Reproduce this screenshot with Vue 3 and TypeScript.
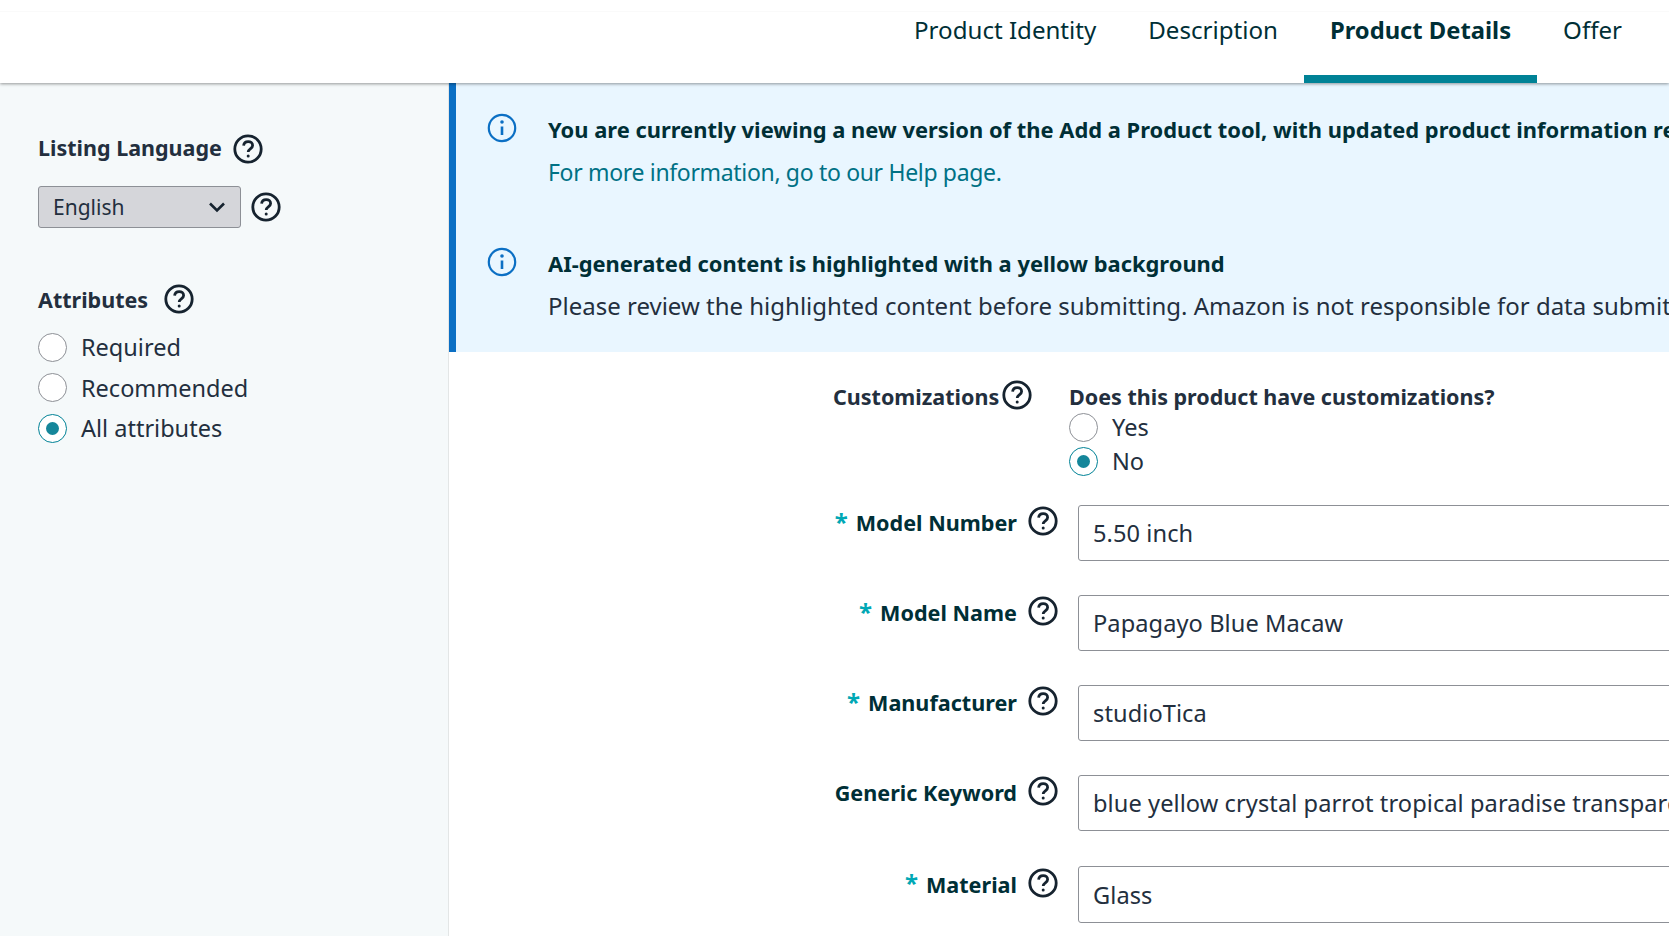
<script setup lang="ts">
const tabs = [
  { label: 'Product Identity', active: false },
  { label: 'Description', active: false },
  { label: 'Product Details', active: true },
  { label: 'Offer', active: false },
]
const attrs = [
  { label: 'Required', on: false },
  { label: 'Recommended', on: false },
  { label: 'All attributes', on: true },
]
const rows = [
  { label: 'Model Number', req: true, value: '5.50 inch' },
  { label: 'Model Name', req: true, value: 'Papagayo Blue Macaw' },
  { label: 'Manufacturer', req: true, value: 'studioTica' },
  { label: 'Generic Keyword', req: false, value: 'blue yellow crystal parrot tropical paradise transparent glass figurine collectible' },
  { label: 'Material', req: true, value: 'Glass' },
]
</script>

<template>
  <div class="page">
    <header class="top">
      <nav class="tabs">
        <div v-for="t in tabs" :key="t.label" class="tab" :class="{ active: t.active }">{{ t.label }}</div>
      </nav>
    </header>
    <div class="body">
      <aside class="side">
        <div class="side-head">
          <span class="side-title">Listing Language</span>
          <svg class="help" viewBox="0 0 30 30"><circle cx="15" cy="15" r="13.2" /><path d="M10.6 11.6c.3-2.5 2.2-4 4.6-4 2.5 0 4.4 1.5 4.4 3.8 0 3.4-4.4 3.4-4.4 6.6" /><circle class="dot" cx="15.2" cy="22" r="1.5" /></svg>
        </div>
        <div class="lang-row">
          <div class="select">
            <span>English</span>
            <svg class="chev" viewBox="0 0 18 12"><path d="M2 2.5 9 9.5 16 2.5" /></svg>
          </div>
          <svg class="help" viewBox="0 0 30 30"><circle cx="15" cy="15" r="13.2" /><path d="M10.6 11.6c.3-2.5 2.2-4 4.6-4 2.5 0 4.4 1.5 4.4 3.8 0 3.4-4.4 3.4-4.4 6.6" /><circle class="dot" cx="15.2" cy="22" r="1.5" /></svg>
        </div>
        <div class="attr-head">
          <span class="side-title">Attributes</span>
          <svg class="help" viewBox="0 0 30 30"><circle cx="15" cy="15" r="13.2" /><path d="M10.6 11.6c.3-2.5 2.2-4 4.6-4 2.5 0 4.4 1.5 4.4 3.8 0 3.4-4.4 3.4-4.4 6.6" /><circle class="dot" cx="15.2" cy="22" r="1.5" /></svg>
        </div>
        <div class="attr-list">
          <label v-for="a in attrs" :key="a.label" class="radio-row">
            <span class="radio" :class="{ on: a.on }"></span>
            <span>{{ a.label }}</span>
          </label>
        </div>
      </aside>
      <main class="main">
        <section class="banner">
          <div class="msg">
            <svg class="info" viewBox="0 0 30 30"><circle cx="15" cy="15" r="13.2" /><path d="M15 13.5v8.5" /><circle class="idot" cx="15" cy="9" r="1.8" /></svg>
            <div>
              <div class="msg-title">You are currently viewing a new version of the Add a Product tool, with updated product information requirements.</div>
              <div class="msg-link">For more information, go to our Help page.</div>
            </div>
          </div>
          <div class="msg second">
            <svg class="info" viewBox="0 0 30 30"><circle cx="15" cy="15" r="13.2" /><path d="M15 13.5v8.5" /><circle class="idot" cx="15" cy="9" r="1.8" /></svg>
            <div>
              <div class="msg-title">AI-generated content is highlighted with a yellow background</div>
              <div class="msg-text">Please review the highlighted content before submitting. Amazon is not responsible for data submitted.</div>
            </div>
          </div>
        </section>
        <section class="form">
          <div class="custom">
            <div class="custom-label">
              <span class="strong">Customizations</span>
              <svg class="help" viewBox="0 0 30 30"><circle cx="15" cy="15" r="13.2" /><path d="M10.6 11.6c.3-2.5 2.2-4 4.6-4 2.5 0 4.4 1.5 4.4 3.8 0 3.4-4.4 3.4-4.4 6.6" /><circle class="dot" cx="15.2" cy="22" r="1.5" /></svg>
            </div>
            <div class="custom-body">
              <div class="strong">Does this product have customizations?</div>
              <label class="radio-row tight"><span class="radio"></span><span>Yes</span></label>
              <label class="radio-row tight"><span class="radio on"></span><span>No</span></label>
            </div>
          </div>
          <div v-for="r in rows" :key="r.label" class="row">
            <div class="row-label">
              <span v-if="r.req" class="star">*</span>
              <span class="name">{{ r.label }}</span>
              <svg class="help" viewBox="0 0 30 30"><circle cx="15" cy="15" r="13.2" /><path d="M10.6 11.6c.3-2.5 2.2-4 4.6-4 2.5 0 4.4 1.5 4.4 3.8 0 3.4-4.4 3.4-4.4 6.6" /><circle class="dot" cx="15.2" cy="22" r="1.5" /></svg>
            </div>
            <div class="input">{{ r.value }}</div>
          </div>
        </section>
      </main>
    </div>
  </div>
</template>

<style>
html, body { margin: 0; background: #fff; overflow: hidden; }
</style>

<style scoped>
.page {
  width: 1669px;
  height: 936px;
  overflow: hidden;
  font-family: "Noto Sans", sans-serif;
  color: #232f3e;
  display: flex;
  flex-direction: column;
}
.top {
  height: 71px;
  padding-top: 12px;
  flex: none;
  box-shadow: 0 1px 3px rgba(0, 0, 0, .4);
  position: relative;
  z-index: 2;
  background: linear-gradient(#fafafa 0, #fafafa 1px, #fff 1px);
  background-position: 0 11px;
  background-repeat: no-repeat;
  display: flex;
  justify-content: flex-end;
}
.tabs { display: flex; height: 71px; padding-right: 21px; }
.tab {
  padding: 2px 26px 0;
  font-size: 24.1px;
  line-height: 32px;
  color: #002f36;
  box-sizing: border-box;
  white-space: nowrap;
}
.tab.active { font-size: 23.75px; font-weight: 700; border-bottom: 8px solid #008296; }
.body { flex: 1; display: flex; min-height: 0; }
.side {
  width: 449px;
  flex: none;
  box-sizing: border-box;
  background: #f5f9fa;
  border-right: 1px solid #e3e6e6;
  padding: 50px 0 0 38px;
}
.side-head, .lang-row, .attr-head { display: flex; align-items: center; }
.side-head { gap: 11px; height: 30px; }
.side-head .help { margin-top: 2px; }
.attr-head .side-title { margin-top: 2px; }
.side-title { font-size: 21.5px; font-weight: 700; line-height: 30px; }
.help { width: 30px; height: 30px; flex: none; }
.help circle { fill: none; stroke: #16232f; stroke-width: 2.8; }
.help path { fill: none; stroke: #16232f; stroke-width: 2.8; }
.help .dot { fill: #16232f; stroke: none; }
.lang-row { margin-top: 23px; gap: 10px; }
.select {
  width: 203px;
  height: 42px;
  box-sizing: border-box;
  border: 1px solid #8d9096;
  border-radius: 3px;
  background: #d5d6da;
  padding: 0 14px;
  font-size: 21px;
  display: flex;
  align-items: center;
  justify-content: space-between;
}
.chev { width: 18px; height: 12px; }
.chev path { fill: none; stroke: #16232f; stroke-width: 2.6; }
.attr-head { margin-top: 56px; gap: 16px; height: 30px; }
.attr-list { margin-top: 18px; display: flex; flex-direction: column; gap: 10.5px; }
.radio-row {
  display: flex;
  align-items: center;
  gap: 14px;
  font-size: 23.5px;
  line-height: 30px;
  height: 30px;
}
.radio {
  width: 29px;
  height: 29px;
  box-sizing: border-box;
  border: 1px solid #8d9096;
  border-radius: 50%;
  background: #fff;
  flex: none;
  position: relative;
}
.radio.on { border-color: #008296; }
.radio.on::after {
  content: "";
  position: absolute;
  left: 7px;
  top: 7px;
  width: 13px;
  height: 13px;
  border-radius: 50%;
  background: #15869a;
}
.main { flex: 1; min-width: 0; overflow: hidden; }
.banner {
  height: 269px;
  box-sizing: border-box;
  background: #e9f6ff;
  border-left: 7px solid #0b6fc4;
  padding: 32px 0 0 31px;
}
.msg { display: flex; gap: 31px; white-space: nowrap; }
.msg.second { margin-top: 62px; }
.info { width: 30px; height: 30px; flex: none; margin-top: -2px; }
.info circle { fill: none; stroke: #0b6fc4; stroke-width: 2.2; }
.info path { fill: none; stroke: #0b6fc4; stroke-width: 2.6; }
.info .idot { fill: #0b6fc4; stroke: none; }
.msg-title { font-size: 21.9px; font-weight: 700; color: #002f36; line-height: 30px; }
.msg-link { font-size: 23px; letter-spacing: -.33px; color: #007185; line-height: 30px; margin-top: 12px; }
.msg-text { font-size: 24px; color: #232f3e; line-height: 30px; margin-top: 12px; }
.form { padding-top: 30px; }
.custom { display: flex; }
.custom-label {
  width: 568px;
  box-sizing: border-box;
  padding-left: 384px;
  display: flex;
  align-items: flex-start;
  flex: none;
}
.custom-label .help { margin: -2px 0 0 3px; }
.strong { font-size: 21.5px; font-weight: 700; line-height: 30px; }
.custom-body { display: flex; flex-direction: column; margin-left: 52px; }
.radio-row.tight { height: 30px; margin-top: 4px; }
.strong + .radio-row.tight { margin-top: 0; }
.custom + .row { margin-top: 29px; }
.row { display: flex; height: 90px; }
.row:last-child { margin-top: 1px; }
.row-label {
  width: 609px;
  flex: none;
  box-sizing: border-box;
  display: flex;
  justify-content: flex-end;
  align-items: flex-start;
  font-size: 21.6px;
  font-weight: 700;
  color: #002f36;
  line-height: 30px;
}
.row-label .help { margin-top: 1px; }
.row:last-child .help { margin-top: 2px; }
.row:last-child .name { margin-top: 4px; }
.row:last-child .star { margin-top: 2px; }
.star { color: #00a8b5; margin: 2px 8px 0 0; font-size: 24px; }
.name { margin: 3px 11px 0 0; }
.input {
  margin-left: 20px;
  width: 900px;
  height: 56px;
  flex: none;
  box-sizing: border-box;
  border: 1px solid #8d9096;
  border-radius: 3px;
  padding: 0 14px;
  font-size: 23.6px;
  letter-spacing: .08px;
  line-height: 54px;
  white-space: nowrap;
  overflow: hidden;
}
.row:last-child .input { height: 57px; line-height: 56px; }
</style>
